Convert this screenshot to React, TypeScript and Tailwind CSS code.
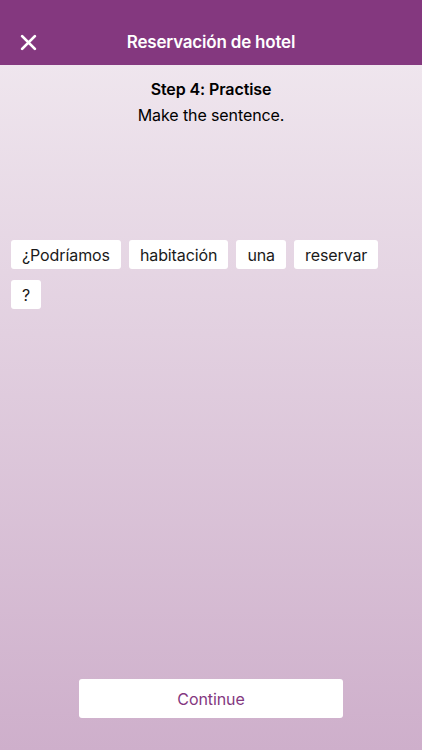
const WORDS = ["¿Podríamos", "habitación", "una", "reservar", "?"];

export default function App() {
  return (
    <div
      className="w-[422px] h-[750px] flex flex-col bg-gradient-to-b from-[#f2ebf1] to-[#ceafcb] text-black"
      style={{ fontFamily: "Inter, 'Noto Sans', sans-serif" }}
    >
      {/* Header */}
      <div className="h-[65px] shrink-0 bg-[#84387f] flex items-center relative pt-[20px]">
        <button className="absolute left-[20px] top-[34px] w-[17px] h-[17px]">
          <svg viewBox="0 0 16 16" className="w-[17px] h-[17px]" fill="none" stroke="white" strokeWidth="2.6" strokeLinecap="round">
            <path d="M2 2 L14 14 M14 2 L2 14" />
          </svg>
        </button>
        <p className="w-full text-center text-white text-[17px] font-semibold tracking-[-0.2px]">Reservación de hotel</p>
      </div>

      {/* Instructions */}
      <div className="pt-[12px] text-center">
        <p className="text-[16px] font-semibold leading-[24px] tracking-[-0.1px]">Step 4: Practise</p>
        <p className="text-[16px] leading-[24px] mt-[2px] tracking-[-0.1px]">Make the sentence.</p>
      </div>

      {/* Word chips */}
      <div className="mt-[113px] px-[11px] flex flex-wrap gap-x-[8px] gap-y-[11px]">
        {WORDS.map((w) => (
          <div key={w} className="bg-white rounded-[3px] h-[29px] px-[11px] flex items-center text-[16px] text-[#1a1a1a] tracking-[-0.1px]">
            {w}
          </div>
        ))}
      </div>

      <div className="flex-1" />

      {/* Continue */}
      <div className="flex justify-center pb-[32px]">
        <button className="w-[264px] h-[39px] bg-white rounded-[3px] text-[16px] text-[#84387f] tracking-[-0.1px]">
          Continue
        </button>
      </div>
    </div>
  );
}
